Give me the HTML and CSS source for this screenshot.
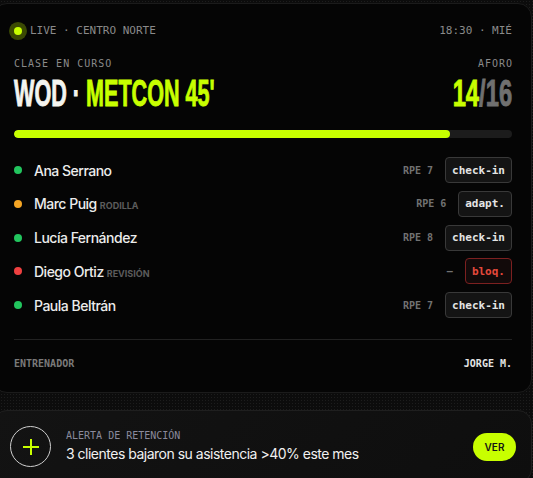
FILE: index.html
```html
<!DOCTYPE html>
<html lang="es">
<head>
<meta charset="utf-8">
<title>WOD · Metcon 45'</title>
<link rel="stylesheet" href="styles.css">
</head>
<body>
<div class="page">
  <section class="card class-card">
    <header class="top">
      <div class="live"><span class="pulse"></span>LIVE · CENTRO NORTE</div>
      <div class="time">18:30 · MIÉ</div>
    </header>
    <div class="labels"><span>CLASE EN CURSO</span><span class="aforo">AFORO</span></div>
    <div class="title-row">
      <h1 class="title"><span class="white">WOD · </span><span class="lime">METCON 45'</span></h1>
      <div class="count"><span class="lime">14</span><span class="dim">/16</span></div>
    </div>
    <div class="bar"><div class="fill" style="width:87.5%"></div></div>
    <ul class="roster">
      <li class="row"><span class="dot ok"></span><span class="name">Ana Serrano</span><span class="rpe">RPE 7</span><span class="chip">check-in</span></li>
      <li class="row"><span class="dot warn"></span><span class="name">Marc Puig<span class="tag">RODILLA</span></span><span class="rpe">RPE 6</span><span class="chip">adapt.</span></li>
      <li class="row"><span class="dot ok"></span><span class="name">Lucía Fernández</span><span class="rpe">RPE 8</span><span class="chip">check-in</span></li>
      <li class="row"><span class="dot bad"></span><span class="name">Diego Ortiz<span class="tag">REVISIÓN</span></span><span class="rpe">—</span><span class="chip danger">bloq.</span></li>
      <li class="row"><span class="dot ok"></span><span class="name">Paula Beltrán</span><span class="rpe">RPE 7</span><span class="chip">check-in</span></li>
    </ul>
    <footer class="coach"><span>ENTRENADOR</span><span class="coach-name">JORGE M.</span></footer>
  </section>
  <section class="card alert">
    <div class="plus-ring">
      <svg width="20" height="20" viewBox="0 0 20 20"><path d="M10 2v16M2 10h16" stroke="#c8ff00" stroke-width="2" fill="none"/></svg>
    </div>
    <div class="alert-text">
      <div class="alert-label">ALERTA DE RETENCIÓN</div>
      <div class="alert-msg">3 clientes bajaron su asistencia &gt;40% este mes</div>
    </div>
    <button class="ver">VER</button>
  </section>
</div>
</body>
</html>
```
FILE: styles.css
```css
html, body { height: 100%; }
body {
  margin: 0;
  overflow: hidden;
  background-color: #0c0c0c;
  background-image: radial-gradient(#1d1d1d 0.8px, transparent 0.9px);
  background-size: 3px 3px;
  font-family: "Inter", "Liberation Sans", sans-serif;
}
.page {
  margin: 3px 1px 0 -7px;
  display: flex;
  flex-direction: column;
  gap: 17px;
}
.card {
  border: 1px solid #1b1b1b;
  border-radius: 14px;
}
.class-card {
  background: #050505;
  padding: 20px 19px 22px 20px;
}
.top {
  display: flex;
  justify-content: space-between;
  align-items: center;
  height: 14px;
  font: 11px/14px "DejaVu Sans Mono", monospace;
  color: #8a8a8a;
}
.live { display: flex; align-items: center; }
.pulse {
  width: 8px;
  height: 8px;
  border-radius: 50%;
  background: #c8ff00;
  box-shadow: 0 0 0 5px rgba(200, 255, 0, 0.28);
  margin-right: 8px;
}
.labels {
  margin-top: 20px;
  display: flex;
  justify-content: space-between;
  font: 10px/12px "DejaVu Sans Mono", monospace;
  letter-spacing: 1px;
  color: #8a8a8a;
}
.aforo { margin-right: -1px; }
.title-row {
  margin-top: 6px;
  height: 36px;
  display: flex;
  justify-content: space-between;
  align-items: flex-start;
}
.title, .count {
  margin: 0;
  font: 700 36px/36px "Liberation Sans", sans-serif;
  white-space: nowrap;
  -webkit-text-stroke: 0.9px currentColor;
}
.title {
  transform: scaleX(0.6);
  transform-origin: left top;
}
.count {
  transform: scaleX(0.66);
  transform-origin: right top;
}
.white { color: #f4f4ef; }
.lime { color: #c8ff00; }
.dim { color: #707070; }
.bar {
  margin-top: 18px;
  height: 8px;
  border-radius: 4px;
  background: #1c1c1c;
  overflow: hidden;
}
.fill {
  height: 100%;
  border-radius: 4px;
  background: #c8ff00;
}
.roster {
  list-style: none;
  margin: 19px 0 0;
  padding: 0;
  display: flex;
  flex-direction: column;
  gap: 7.8px;
}
.row {
  height: 26px;
  display: flex;
  align-items: center;
}
.dot {
  width: 8px;
  height: 8px;
  border-radius: 50%;
  margin-right: 12px;
  flex: none;
}
.dot.ok { background: #22c55e; }
.dot.warn { background: #f5a524; }
.dot.bad { background: #ef4040; }
.name {
  flex: 1;
  font-weight: 500;
  font-size: 14px;
  letter-spacing: -0.5px;
  color: #ececec;
}
.tag {
  margin-left: 3px;
  font-size: 9px;
  font-weight: 700;
  letter-spacing: 0;
  color: #5c5c5c;
}
.rpe {
  margin-right: 12px;
  font: 700 10px "DejaVu Sans Mono", monospace;
  color: #727272;
}
.chip {
  box-sizing: border-box;
  height: 26px;
  display: flex;
  align-items: center;
  padding: 0 6px;
  border: 1px solid #393939;
  border-radius: 4px;
  background: #141414;
  font: 700 11px "DejaVu Sans Mono", monospace;
  color: #e4e4e4;
}
.chip.danger {
  border-color: #7c2020;
  background: #120a0a;
  color: #e5493c;
}
.coach {
  margin-top: 21px;
  padding-top: 18px;
  border-top: 1px solid #222;
  display: flex;
  justify-content: space-between;
  font: 700 10px/12px "DejaVu Sans Mono", monospace;
  color: #7a7a7a;
}
.coach-name { color: #e4e4e4; }
.alert {
  background: linear-gradient(135deg, #131313, #0e0e0e);
  border-color: #1f1f1f;
  padding: 15px 15px 15px 16px;
  display: flex;
  align-items: center;
  gap: 15px;
}
.plus-ring {
  box-sizing: border-box;
  width: 41px;
  height: 41px;
  border: 1.5px solid #cfcfcf;
  border-radius: 50%;
  display: flex;
  align-items: center;
  justify-content: center;
  flex: none;
}
.alert-text { flex: 1; }
.alert-label {
  font: 10px/12px "DejaVu Sans Mono", monospace;
  color: #8a8a9c;
}
.alert-msg {
  margin-top: 3px;
  font-size: 14px;
  line-height: 18px;
  letter-spacing: -0.5px;
  color: #f0f0f0;
}
.ver {
  width: 43px;
  height: 28px;
  border: none;
  border-radius: 14px;
  background: #c8ff00;
  color: #151515;
  font: 600 10px "Inter", sans-serif;
  padding: 0;
}
```
